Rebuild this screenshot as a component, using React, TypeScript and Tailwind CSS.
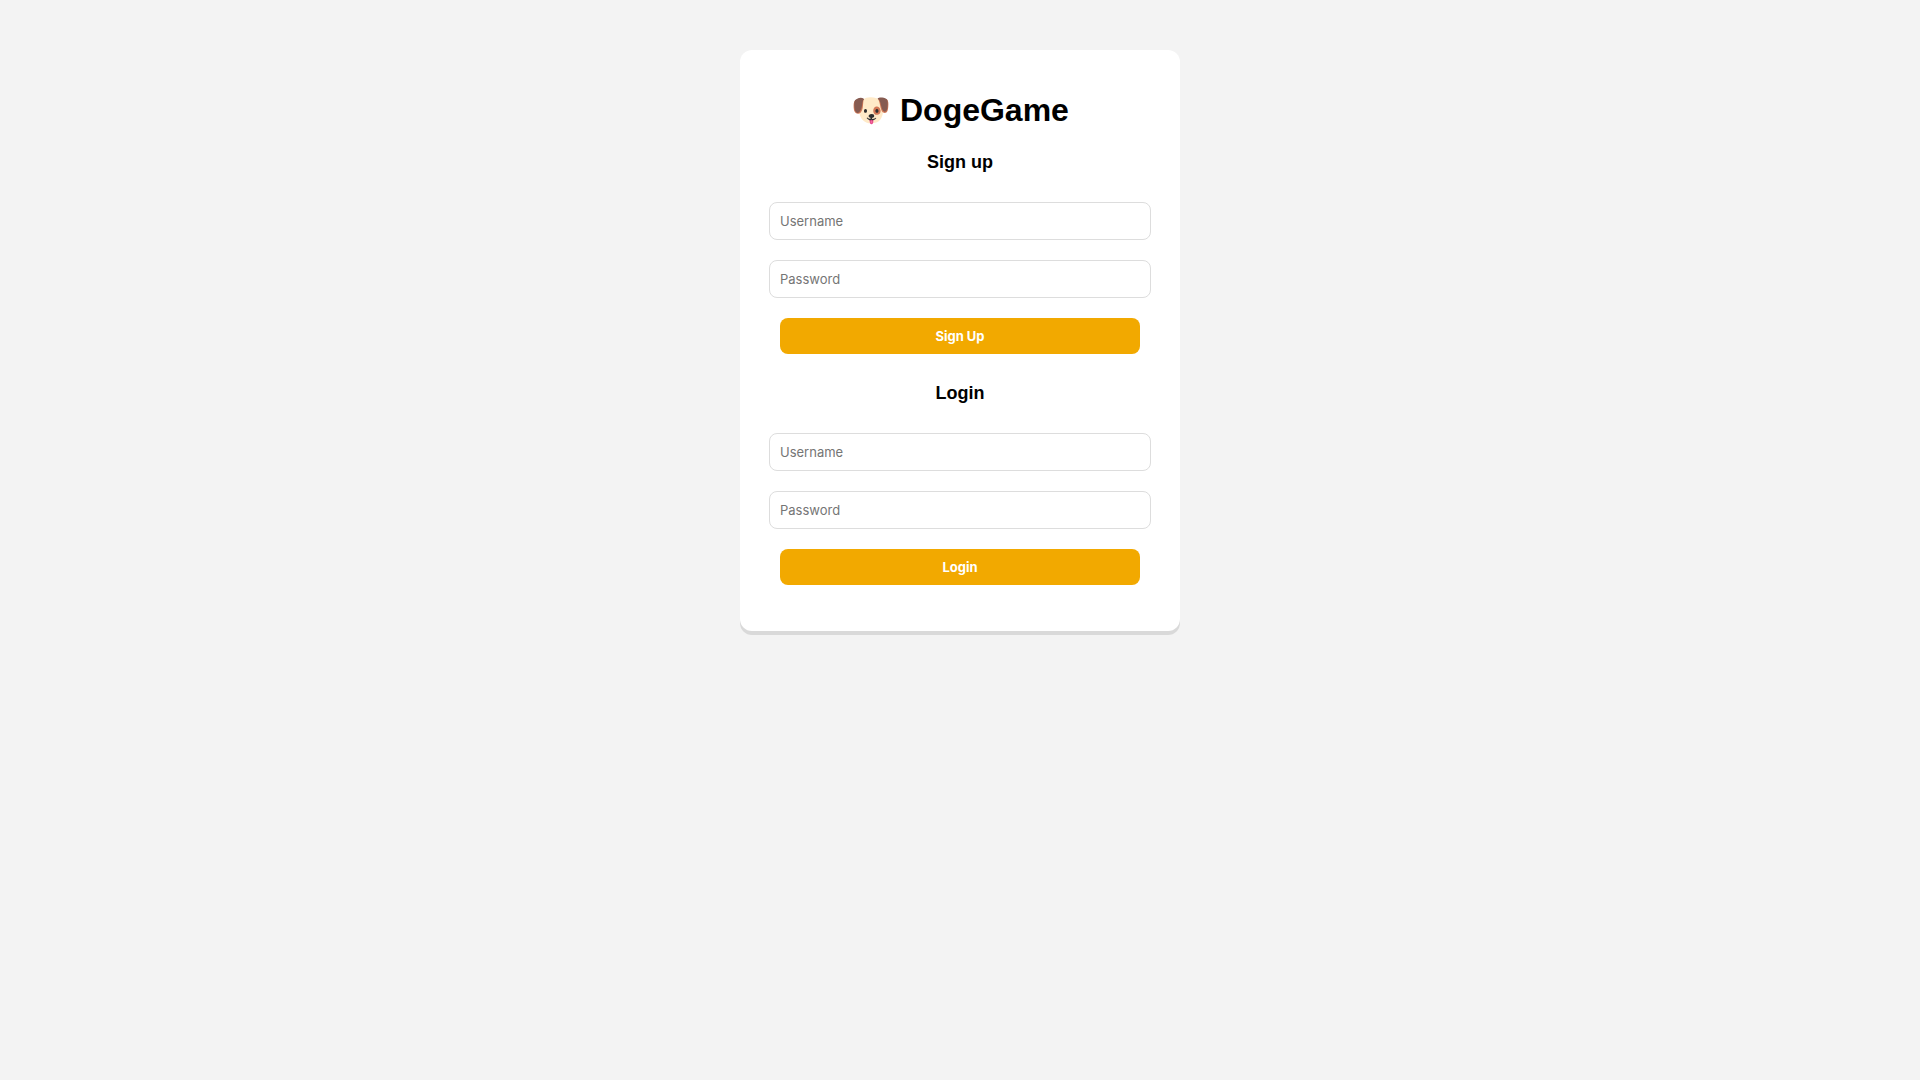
import { useState } from "react";
import type { FormEvent } from "react";

type AuthFormProps = {
  id: string;
  title: string;
  action: string;
};

const inputClass =
  "block w-full h-[38px] px-2.5 bg-white border border-[#dddddd] rounded-lg font-[Inter,sans-serif] text-[13px] leading-4 text-black placeholder:text-[#757575]";

function AuthForm({ id, title, action }: AuthFormProps) {
  const [username, setUsername] = useState("");
  const [password, setPassword] = useState("");

  const handleSubmit = (e: FormEvent) => {
    e.preventDefault();
  };

  return (
    <form onSubmit={handleSubmit} className="flex flex-col">
      <h2 className="mb-[30px] text-lg leading-5 font-bold text-center">{title}</h2>
      <div className="flex flex-col gap-5">
        <input
          id={`${id}-username`}
          type="text"
          aria-label="Username"
          placeholder="Username"
          autoComplete="username"
          value={username}
          onChange={(e) => setUsername(e.target.value)}
          className={inputClass}
        />
        <input
          id={`${id}-password`}
          type="password"
          aria-label="Password"
          placeholder="Password"
          autoComplete="current-password"
          value={password}
          onChange={(e) => setPassword(e.target.value)}
          className={inputClass}
        />
        <button
          type="submit"
          className="h-9 mx-[11px] bg-[#f2a900] hover:bg-[#d99700] text-white font-[Inter,sans-serif] text-[13px] leading-4 font-bold rounded-lg cursor-pointer"
        >
          {action}
        </button>
      </div>
    </form>
  );
}

export default function App() {
  return (
    <div className="min-h-screen py-[50px] bg-[#f3f3f3] font-['Liberation_Sans',Arial,sans-serif] text-black">
      <main className="w-full max-w-[440px] mx-auto px-[29px] pt-[42px] pb-[46px] bg-white rounded-xl shadow-[0_4px_0_#d9d9d9]">
        <h1 className="mb-6 text-[32px] leading-9 font-bold text-center">🐶 DogeGame</h1>
        <div className="flex flex-col gap-[29px]">
          <AuthForm id="signup" title="Sign up" action="Sign Up" />
          <AuthForm id="login" title="Login" action="Login" />
        </div>
      </main>
    </div>
  );
}
